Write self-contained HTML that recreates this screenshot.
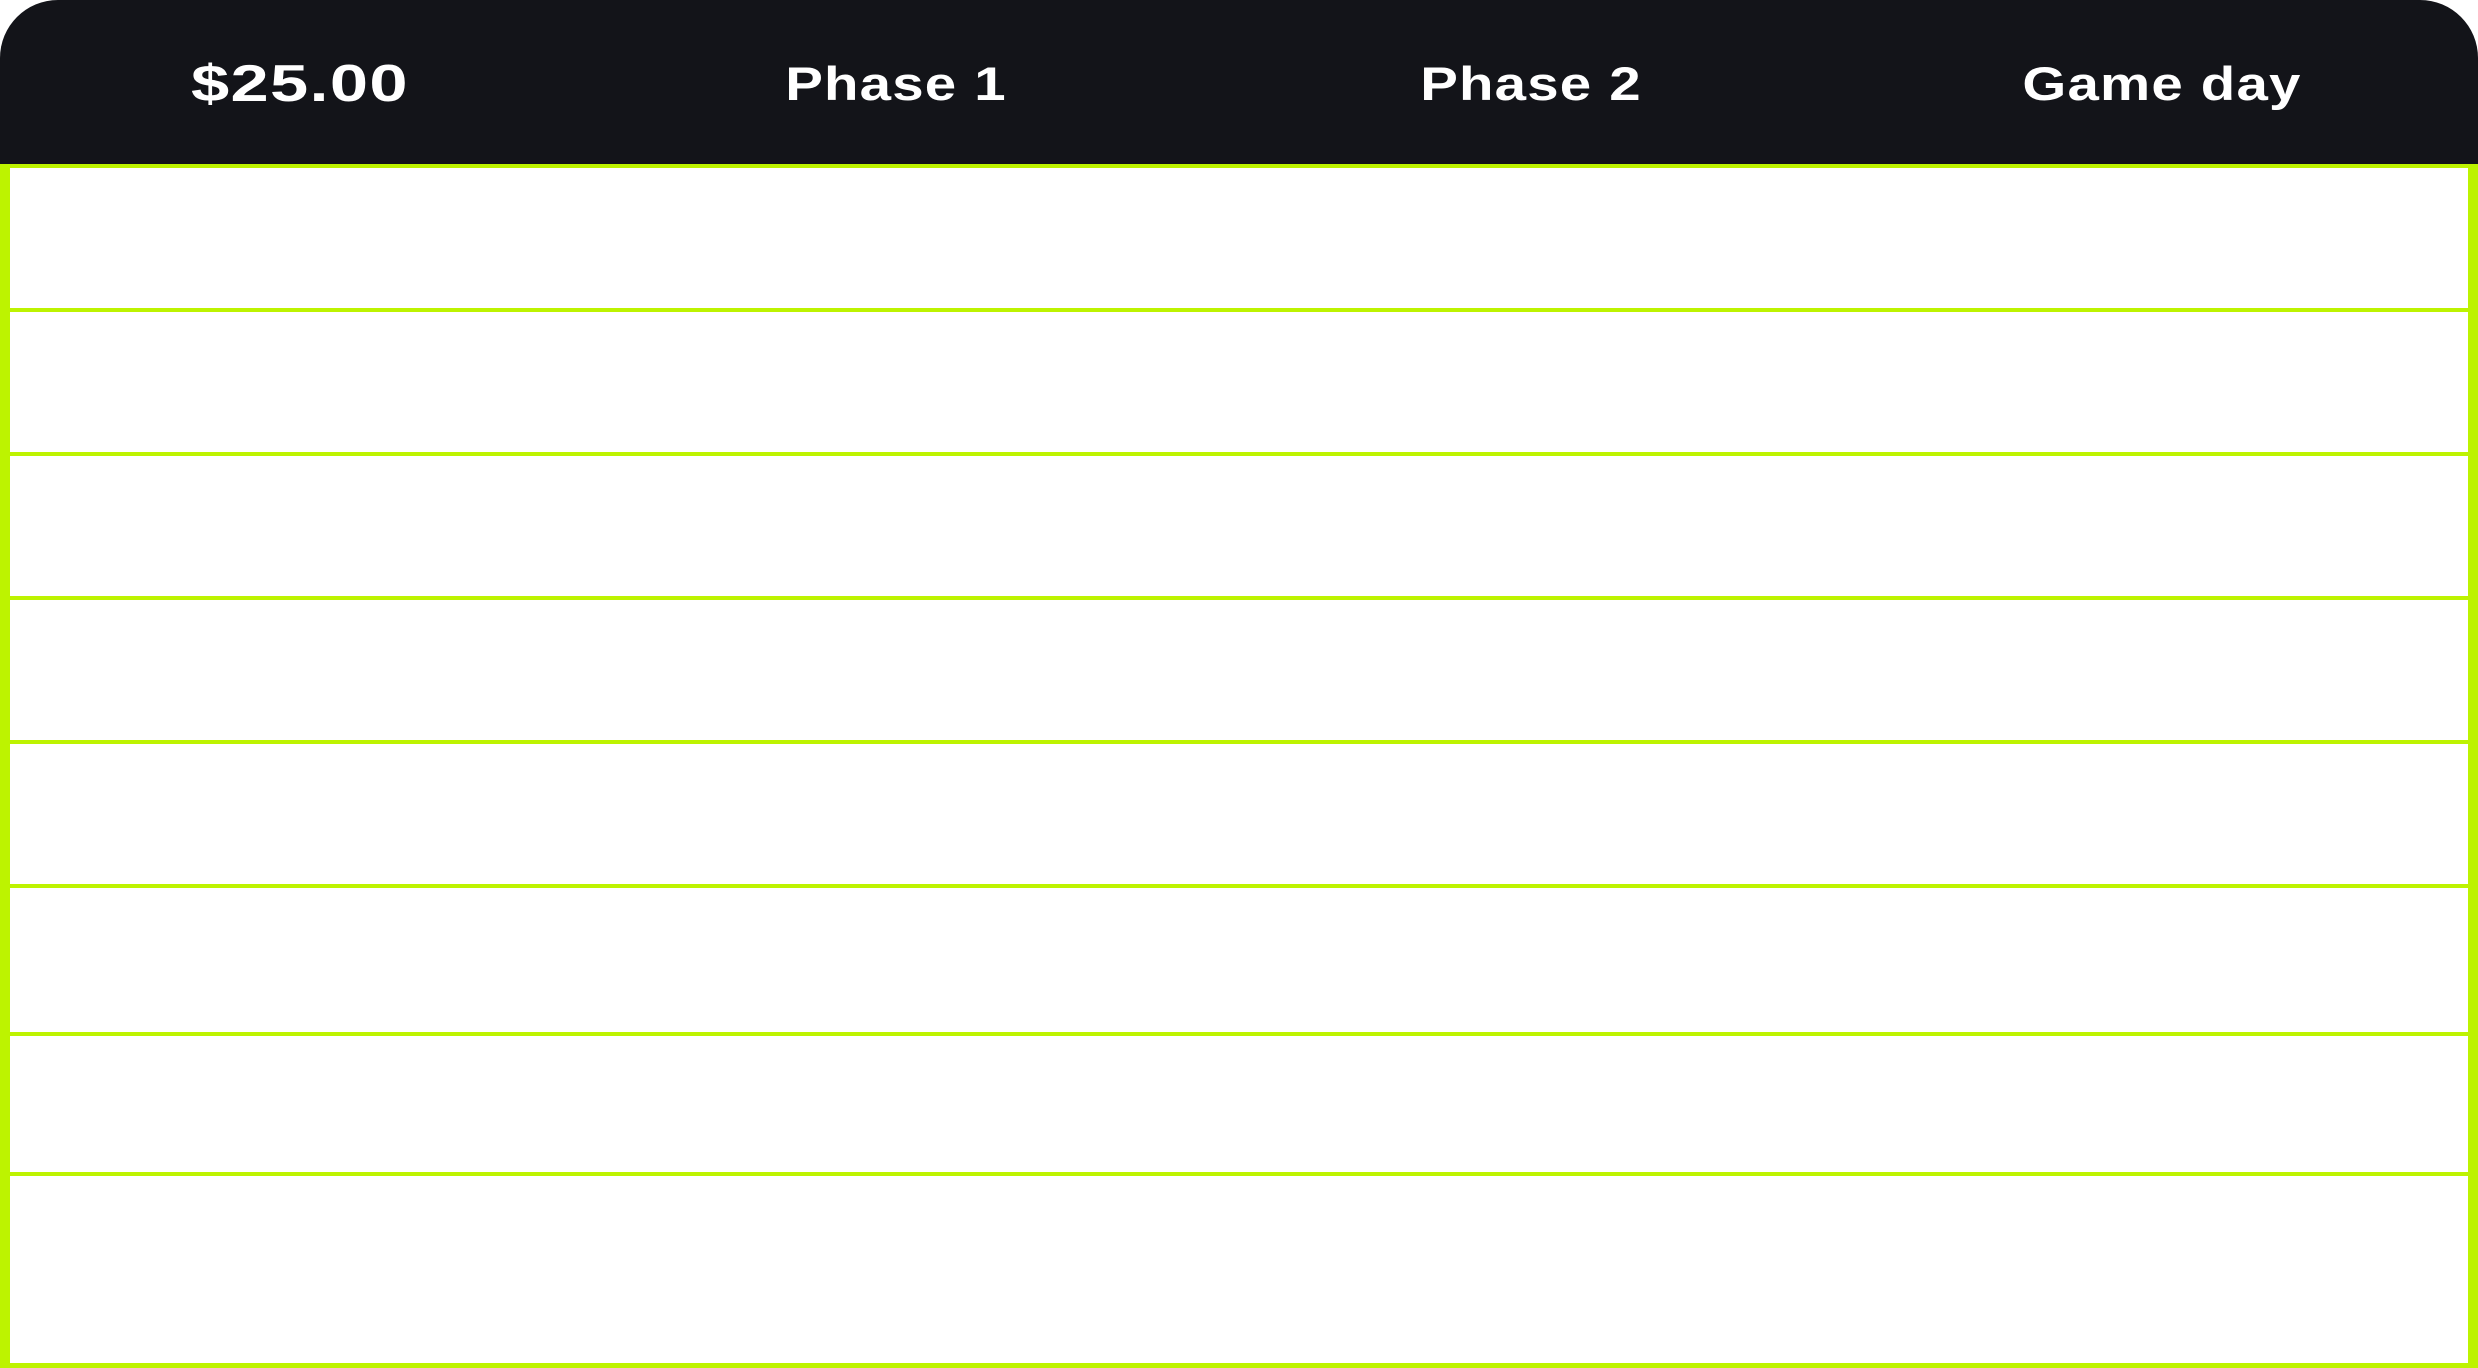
<!DOCTYPE html>
<html><head><style>
html,body{margin:0;padding:0;width:2478px;height:1368px;background:#fff;overflow:hidden;position:relative}
.hdr{position:absolute;left:0;top:0;width:2478px;height:164px;background:#131419;border-radius:58px 58px 0 0}
.t{position:absolute;top:54px;width:600px;margin-left:-300px;text-align:center;color:#fff;font:bold 47px/60px "Liberation Sans",sans-serif;transform:scaleX(1.2);letter-spacing:1px}
.g{position:absolute;background:#bdf300}
</style></head><body>
<div class="hdr"></div>
<div class="t" style="left:300px;font-size:52px;transform:scaleX(1.32)">$25.00</div>
<div class="t" style="left:896px">Phase 1</div>
<div class="t" style="left:1531px">Phase 2</div>
<div class="t" style="left:2162px">Game day</div>
<div class="g" style="left:0;top:164px;width:2478px;height:4px"></div>
<div class="g" style="left:0;top:164px;width:10px;height:1204px"></div>
<div class="g" style="left:2468px;top:164px;width:10px;height:1204px"></div>
<div class="g" style="left:0;top:1363px;width:2478px;height:5px"></div>
<div class="g" style="left:0;top:308px;width:2478px;height:4px"></div>
<div class="g" style="left:0;top:452px;width:2478px;height:4px"></div>
<div class="g" style="left:0;top:596px;width:2478px;height:4px"></div>
<div class="g" style="left:0;top:740px;width:2478px;height:4px"></div>
<div class="g" style="left:0;top:884px;width:2478px;height:4px"></div>
<div class="g" style="left:0;top:1032px;width:2478px;height:4px"></div>
<div class="g" style="left:0;top:1172px;width:2478px;height:4px"></div>
</body></html>
